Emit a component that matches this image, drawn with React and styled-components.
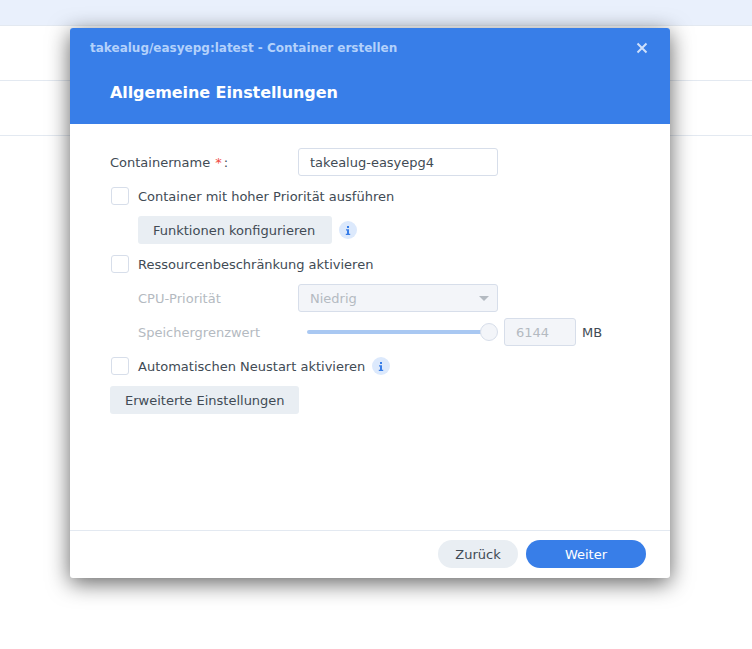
import React from 'react'
import styled, { createGlobalStyle } from 'styled-components'

const GlobalStyle = createGlobalStyle`
  html, body {
    margin: 0;
    padding: 0;
    height: 100%;
    background: #fff;
  }
  body {
    font-family: "DejaVu Sans", sans-serif;
    font-size: 13px;
    color: #414b55;
  }
`

const Page = styled.div`
  position: relative;
  width: 752px;
  height: 649px;
  overflow: hidden;
  background: #fff;
`

const TopBand = styled.div`
  height: 25px;
  background: #e9f0fc;
  border-bottom: 1px solid #e3e9f1;
`

const BackRow = styled.div`
  height: 54px;
  border-bottom: 1px solid #e3e9f1;
`

const Dialog = styled.div`
  position: absolute;
  left: 70px;
  top: 28px;
  width: 600px;
  height: 550px;
  display: flex;
  flex-direction: column;
  background: #fff;
  border-radius: 3px;
  box-shadow: 0 5px 22px rgba(0, 0, 0, 0.62);
`

const Header = styled.header`
  height: 96px;
  flex: none;
  box-sizing: border-box;
  background: #387ee8;
  border-radius: 3px 3px 0 0;
  padding: 12px 20px 0 20px;
  display: flex;
  flex-direction: column;
`

const TitleBar = styled.div`
  display: flex;
  align-items: center;
  justify-content: space-between;
  height: 15px;
  font-size: 12px;
  font-weight: 700;
  color: #b3d1fb;
`

const CloseButton = styled.button`
  display: flex;
  padding: 0;
  border: 0;
  background: none;
  margin-right: 2px;
`

const Heading = styled.h1`
  margin: 27px 0 0 20px;
  font-size: 16px;
  line-height: 22px;
  font-weight: 700;
  letter-spacing: -0.08px;
  color: #fff;
`

const Body = styled.div`
  flex: 1;
  box-sizing: border-box;
  padding: 24px 40px 0;
  display: flex;
  flex-direction: column;
`

const FieldRow = styled.div`
  display: flex;
  align-items: center;
  height: 28px;
  margin-top: ${(p) => p.$top || 0}px;
  margin-left: ${(p) => p.$indent || 0}px;
`

const Label = styled.label`
  width: ${(p) => p.$width}px;
  flex: none;
  color: ${(p) => (p.$disabled ? '#b4bac1' : '#414b55')};
`

const Required = styled.span`
  margin: 0 2px 0 1px;
  color: #f0483e;
`

const TextInput = styled.div`
  width: 200px;
  height: 28px;
  box-sizing: border-box;
  padding: 0 11px;
  display: flex;
  align-items: center;
  background: ${(p) => (p.$disabled ? '#f3f5f9' : '#fff')};
  border: 1px solid #d7deea;
  border-radius: 3px;
  color: ${(p) => (p.$disabled ? '#b4bac1' : '#414b55')};
`

const SelectBox = styled(TextInput)`
  justify-content: space-between;
  padding-right: 8px;
`

const Caret = styled.span`
  width: 0;
  height: 0;
  border-left: 5px solid transparent;
  border-right: 5px solid transparent;
  border-top: 5px solid #b4bac1;
`

const CheckRow = styled.div`
  display: flex;
  align-items: center;
  height: 20px;
  margin-top: ${(p) => p.$top || 0}px;
  margin-left: 1px;
`

const Checkbox = styled.span`
  width: 18px;
  height: 18px;
  flex: none;
  box-sizing: border-box;
  background: #fff;
  border: 1px solid #d7deea;
  border-radius: 3px;
  margin-right: 9px;
`

const InfoBadge = styled.span`
  width: 18px;
  height: 18px;
  margin-left: ${(p) => p.$left}px;
  flex: none;
  border-radius: 50%;
  background: #dce9fc;
  display: flex;
  align-items: center;
  justify-content: center;
`

const GrayButton = styled.button`
  width: ${(p) => p.$width}px;
  height: 28px;
  padding: 0 0 0 ${(p) => p.$pad}px;
  text-align: left;
  border: 0;
  border-radius: 3px;
  background: #e9eef3;
  color: #414b55;
  font-family: inherit;
  font-size: 13px;
`

const SliderTrack = styled.div`
  position: relative;
  width: 182px;
  height: 4px;
  margin-left: 9px;
  margin-right: 15px;
  border-radius: 2px;
  background: #a9c8f2;
`

const SliderKnob = styled.span`
  position: absolute;
  right: -9px;
  top: -7px;
  width: 18px;
  height: 18px;
  box-sizing: border-box;
  background: #f3f5f9;
  border: 1px solid #d7deea;
  border-radius: 50%;
`

const NumberInput = styled(TextInput)`
  width: 72px;
`

const Unit = styled.span`
  margin-left: 6px;
`

const Footer = styled.footer`
  flex: none;
  border-top: 1px solid #e3e9f1;
  padding: 9px 24px 0 0;
  height: 38px;
  display: flex;
  justify-content: flex-end;
  gap: 8px;
`

const PillButton = styled.button`
  width: ${(p) => p.$width}px;
  height: 28px;
  border: 0;
  border-radius: 14px;
  background: ${(p) => (p.$primary ? '#387ee8' : '#e9eef3')};
  color: ${(p) => (p.$primary ? '#fff' : '#414b55')};
  font-family: inherit;
  font-size: 13px;
`

const InfoIcon = () => (
  <svg width="6" height="9" viewBox="0 0 6 9">
    <path d="M2 0h2v2H2zM1 3.2h3v4.6h1.2V9H.8V7.8H2V4.4H1z" fill="#387ee8" />
  </svg>
)

const CloseIcon = () => (
  <svg width="12" height="12" viewBox="0 0 12 12">
    <path d="M1.5 1.5l9 9M10.5 1.5l-9 9" stroke="#cfe0fb" strokeWidth="2" fill="none" />
  </svg>
)

const App = () => {
  return (
    <Page>
      <GlobalStyle />
      <TopBand />
      <BackRow />
      <BackRow />

      <Dialog>
        <Header>
          <TitleBar>
            <span>takealug/easyepg:latest - Container erstellen</span>
            <CloseButton><CloseIcon /></CloseButton>
          </TitleBar>
          <Heading>Allgemeine Einstellungen</Heading>
        </Header>

        <Body>
          <FieldRow>
            <Label $width={188}>Containername <Required>*</Required>:</Label>
            <TextInput>takealug-easyepg4</TextInput>
          </FieldRow>
          <CheckRow $top={10}>
            <Checkbox />
            Container mit hoher Priorität ausführen
          </CheckRow>
          <FieldRow $top={10} $indent={28}>
            <GrayButton $width={194} $pad={15}>Funktionen konfigurieren</GrayButton>
            <InfoBadge $left={7}><InfoIcon /></InfoBadge>
          </FieldRow>
          <CheckRow $top={10}>
            <Checkbox />
            Ressourcenbeschränkung aktivieren
          </CheckRow>
          <FieldRow $top={10} $indent={28}>
            <Label $width={160} $disabled>CPU-Priorität</Label>
            <SelectBox $disabled>Niedrig<Caret /></SelectBox>
          </FieldRow>
          <FieldRow $top={6} $indent={28}>
            <Label $width={160} $disabled>Speichergrenzwert</Label>
            <SliderTrack><SliderKnob /></SliderTrack>
            <NumberInput $disabled>6144</NumberInput>
            <Unit>MB</Unit>
          </FieldRow>
          <CheckRow $top={10}>
            <Checkbox />
            Automatischen Neustart aktivieren
            <InfoBadge $left={7}><InfoIcon /></InfoBadge>
          </CheckRow>
          <FieldRow $top={10}>
            <GrayButton $width={189} $pad={15}>Erweiterte Einstellungen</GrayButton>
          </FieldRow>
        </Body>

        <Footer>
          <PillButton $width={80}>Zurück</PillButton>
          <PillButton $width={120} $primary>Weiter</PillButton>
        </Footer>
      </Dialog>
    </Page>
  )
}

export default App
